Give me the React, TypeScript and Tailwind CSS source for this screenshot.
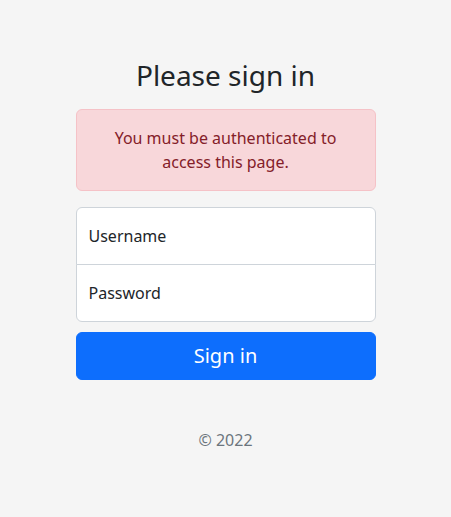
export default function App() {
  return (
    <div
      className="min-h-screen flex items-center justify-center bg-[#f5f5f5] pt-[50px] pb-10 text-[#212529]"
      style={{ fontFamily: '"Noto Sans", "Open Sans", sans-serif' }}
    >
      <form className="w-full max-w-[330px] px-[15px] text-center">
        <h1 className="text-[28px] leading-[1.2] font-normal mb-4">Please sign in</h1>

        <div className="bg-[#f8d7da] border border-[#f5c2c7] text-[#842029] rounded-[6px] p-4 mb-4 text-base leading-6">
          You must be authenticated to access this page.
        </div>

        <div className="flex flex-col">
          <input
            type="text"
            placeholder="Username"
            className="h-[58px] w-full bg-white border border-[#ced4da] rounded-t-[6px] px-3 text-base outline-none placeholder:text-[#212529]"
          />
          <input
            type="password"
            placeholder="Password"
            className="h-[58px] w-full bg-white border border-[#ced4da] -mt-px rounded-b-[6px] px-3 text-base outline-none placeholder:text-[#212529]"
          />
        </div>

        <button
          type="button"
          className="mt-[10px] w-full h-12 bg-[#0d6efd] text-white text-xl rounded-[6px] border border-[#0d6efd]"
        >
          Sign in
        </button>

        <p className="mt-12 mb-4 text-[#6c757d] text-base leading-6">© 2022</p>
      </form>
    </div>
  );
}
